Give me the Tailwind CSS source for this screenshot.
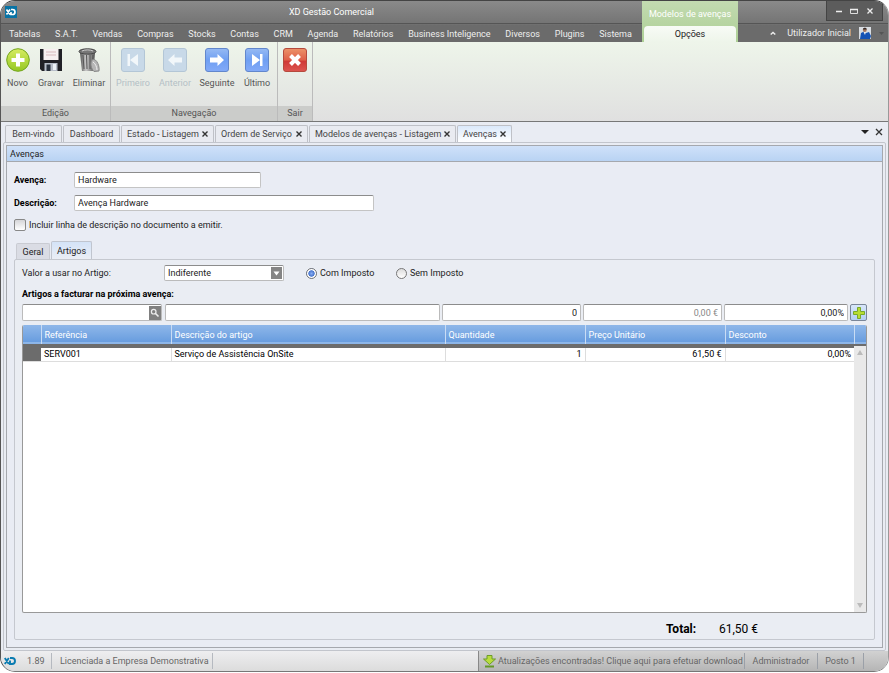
<!DOCTYPE html>
<html lang="pt">
<head>
    <meta charset="UTF-8">
    <meta name="viewport" content="width=device-width, initial-scale=1.0">
    <title>XD Gestão Comercial</title>
    <script src="https://cdn.jsdelivr.net/npm/@tailwindcss/browser@4"></script>
</head>
<body class="bg-white font-['Roboto','Open_Sans',sans-serif] text-[9px] leading-3 text-[#222]">

<div class="flex min-h-screen flex-col pb-px">
<div class="flex flex-1 flex-col overflow-hidden rounded-[15px] border-x border-t border-b border-l-[#555] border-t-[#444] border-r-[#999] border-b-[#777] bg-[#e9ecf3]">

    <!-- Title bar and menu -->
    <header class="flex h-[41px] bg-linear-to-b from-[#8a8a8a] from-0% via-[#747474] via-55% to-[#6b6b6b] to-60% text-[#eee]">
        <div class="flex w-[641px] shrink-0 flex-col">
            <div class="flex h-[23px] items-center border-b border-[#555] pl-1">
                <svg class="size-3" viewBox="0 0 12 12"><rect width="12" height="12" fill="#0873a5"/><path d="M1.500 3.500 5 8.500M5 3.500 1.500 8.500M6 3.500h1.500a2.500 2.500 0 0 1 0 5H6V6" fill="none" stroke="#fff" stroke-width="1.700"/></svg>
                <h1 class="flex-1 pl-1 text-center text-white">XD Gestão Comercial</h1>
            </div>
            <nav class="flex flex-1 items-center justify-between pt-px pr-[10px] pl-2">
                <a href="#">Tabelas</a>
                <a href="#">S.A.T.</a>
                <a href="#">Vendas</a>
                <a href="#">Compras</a>
                <a href="#">Stocks</a>
                <a href="#">Contas</a>
                <a href="#">CRM</a>
                <a href="#">Agenda</a>
                <a href="#">Relatórios</a>
                <a href="#">Business Inteligence</a>
                <a href="#">Diversos</a>
                <a href="#">Plugins</a>
                <a href="#">Sistema</a>
            </nav>
        </div>
        <div class="flex w-24 shrink-0 flex-col bg-linear-to-b from-[#c3dbb1] to-[#adcf95] px-0.5 text-center">
            <div class="flex h-[25px] items-center justify-center whitespace-nowrap text-white">Modelos de avenças</div>
            <a href="#" class="flex flex-1 items-center justify-center rounded-t-sm bg-linear-to-b from-[#f8fbf6] to-[#eef5ea] text-[#222]">Opções</a>
        </div>
        <div class="flex flex-1 flex-col">
            <div class="flex h-[23px] justify-end border-b border-[#555] pr-[5px]">
                <div class="flex h-5 w-[57px] items-center justify-around border-x border-b border-[#444] bg-[#5c5c5c] px-1">
                    <button aria-label="Minimizar"><svg class="size-2" viewBox="0 0 8 8"><path d="M1 4.500h6" stroke="#eee" stroke-width="1.500"/></svg></button>
                    <button aria-label="Maximizar"><svg class="size-2" viewBox="0 0 8 8"><path d="M.5 2.500h7v4h-7z" fill="none" stroke="#ddd"/><path d="M0 2.500h8" stroke="#eee" stroke-width="1.500"/></svg></button>
                    <button aria-label="Fechar"><svg class="size-2" viewBox="0 0 8 8"><path d="m1.500 1.500 5 5m0-5-5 5" stroke="#eee" stroke-width="1.300"/></svg></button>
                </div>
            </div>
            <div class="flex flex-1 items-center justify-end gap-2 pr-1">
                <button aria-label="Recolher"><svg class="mr-[3px] h-2 w-[6px]" viewBox="0 0 6 8"><path d="m.7 5.500 2.300-2 2.300 2" fill="none" stroke="#eee" stroke-width="1.400"/></svg></button>
                <a href="#">Utilizador Inicial</a>
                <svg class="size-3" viewBox="0 0 12 12"><rect width="12" height="12" fill="#d9dde2"/><path d="M1 12 2 6l3-1.500L7 6l3-1 2 4-1 3z" fill="#1552b5"/><path d="m4.500 5 1.500 3 1-3" fill="#eee"/><circle cx="5.800" cy="3" r="1.900" fill="#a9765b"/><path d="M3.800 2.500c0-2.500 4-2.500 4 0z" fill="#352b29"/></svg>
                <svg class="h-[3px] w-[5px]" viewBox="0 0 5 3"><path d="M0 0h5L2.500 3z" fill="#555"/></svg>
            </div>
        </div>
    </header>

    <!-- Ribbon -->
    <div class="flex h-20 border-b border-[#777] bg-linear-to-b from-[#eef5ea] to-[#e0e0e0] text-[#555]">
        <section class="flex flex-col border-r border-[#bbb]">
            <div class="flex flex-1 pt-[6px]">
                <button class="flex w-[33px] flex-col items-center gap-[5px]">
                    <svg class="size-6" viewBox="0 0 24 24"><defs><linearGradient id="lime" x2="0" y2="1"><stop stop-color="#d6ec62"/><stop offset="1" stop-color="#96c722"/></linearGradient></defs><circle cx="12" cy="12" r="11.300" fill="url(#lime)" stroke="#73a51e"/><path d="M12 5.500v13M5.500 12h13" stroke="#fff" stroke-width="4"/></svg>
                    Novo
                </button>
                <button class="flex w-[34px] flex-col items-center gap-[5px]">
                    <svg class="size-6" viewBox="0 0 24 24"><path d="M1 1h22v22H3l-2-2z" fill="#202026"/><path d="M4.500 1h15v11h-15z" fill="#f7eff0"/><path d="M7 4h10M7 7h10" stroke="#d8b9bd"/><path d="M5.500 15h13v8h-13z" fill="#b7bdc9"/><path d="M7.500 16.500h4V23h-4z" fill="#29303d"/><path d="M14 16h3v6h-3z" fill="#edf1f7"/></svg>
                    Gravar
                </button>
                <button class="flex w-[42px] flex-col items-center gap-[5px]">
                    <svg class="size-6" viewBox="0 0 24 24"><defs><linearGradient id="tin"><stop stop-color="#555"/><stop offset=".4" stop-color="#c9c9c9"/><stop offset="1" stop-color="#555"/></linearGradient></defs><path d="M3 5h15l-1.500 18H5z" fill="url(#tin)"/><path d="m6 7 1 14m2.500-14 .5 14M13 7v14m3-14-1 14" stroke="#555"/><ellipse cx="10.500" cy="3.500" rx="8.500" ry="2.700" fill="#777" stroke="#444"/><path d="M5 3c3-1.500 8-1.500 11 0" fill="none" stroke="#ccc"/><path d="M15 12c4-3 8 6 7 11l-5 .5c-3-3-4-8-2-11.500z" fill="#b5b5b5" stroke="#888"/><path d="M16 14c2 1 4 5 4 8" fill="none" stroke="#eee"/></svg>
                    Eliminar
                </button>
            </div>
            <div class="h-[15px] bg-[#cbccca] text-center leading-[15px]">Edição</div>
        </section>
        <section class="flex flex-col border-r border-[#bbb]">
            <div class="flex flex-1 px-px pt-[6px]">
                <button disabled class="flex w-[42px] flex-col items-center gap-[5px] text-[#b4bfc5]">
                    <svg class="size-6" viewBox="0 0 24 24"><rect x=".5" y=".5" width="23" height="23" rx="2.500" fill="#c8d9e8" stroke="#b3c6d6"/><path d="M6.500 6h2.500v12H6.500zM17 6v12l-8-6z" fill="#f2f7fa"/></svg>
                    Primeiro
                </button>
                <button disabled class="flex w-[42px] flex-col items-center gap-[5px] text-[#b4bfc5]">
                    <svg class="size-6" viewBox="0 0 24 24"><rect x=".5" y=".5" width="23" height="23" rx="2.500" fill="#c8d9e8" stroke="#b3c6d6"/><path d="m5 12 6.500-6v3.500H19v5h-7.500V18z" fill="#f2f7fa"/></svg>
                    Anterior
                </button>
                <button class="flex w-[42px] flex-col items-center gap-[5px]">
                    <svg class="size-6" viewBox="0 0 24 24"><defs><linearGradient id="blue" x2="0" y2="1"><stop stop-color="#96baf3"/><stop offset=".5" stop-color="#6f9ff2"/><stop offset="1" stop-color="#83aaf8"/></linearGradient></defs><rect x=".5" y=".5" width="23" height="23" rx="2.500" fill="url(#blue)" stroke="#6287cc"/><path d="m19 12-6.500-6v3.500H5v5h7.500V18z" fill="#fff"/></svg>
                    Seguinte
                </button>
                <button class="flex w-[38px] flex-col items-center gap-[5px]">
                    <svg class="size-6" viewBox="0 0 24 24"><rect x=".5" y=".5" width="23" height="23" rx="2.500" fill="url(#blue)" stroke="#6287cc"/><path d="M15 6h2.500v12H15zM7 6v12l8-6z" fill="#fff"/></svg>
                    Último
                </button>
            </div>
            <div class="h-[15px] bg-[#cbccca] text-center leading-[15px]">Navegação</div>
        </section>
        <section class="flex flex-col border-r border-[#bbb]">
            <div class="flex flex-1 pt-[6px]">
                <button aria-label="Sair" class="flex w-[34px] flex-col items-center">
                    <svg class="size-6" viewBox="0 0 24 24"><defs><linearGradient id="red" x2="0" y2="1"><stop stop-color="#ec9369"/><stop offset=".5" stop-color="#df6048"/><stop offset=".55" stop-color="#cf3936"/><stop offset="1" stop-color="#dd5550"/></linearGradient></defs><rect x=".5" y=".5" width="23" height="23" rx="2.500" fill="url(#red)" stroke="#b54a3d"/><path d="m7.500 7.500 9 9m0-9-9 9" stroke="#fff" stroke-width="4"/></svg>
                </button>
            </div>
            <div class="h-[15px] bg-[#cbccca] text-center leading-[15px]">Sair</div>
        </section>
    </div>

    <!-- Document tabs -->
    <div class="flex h-5 items-end gap-px px-1 pt-[3px] text-[#444]">
        <a href="#" class="flex h-full w-[57px] items-center justify-center rounded-t-xs border border-b-0 border-[#bfc1c7] bg-[#e9ebf1]">Bem-vindo</a>
        <a href="#" class="flex h-full w-[57px] items-center justify-center rounded-t-xs border border-b-0 border-[#bfc1c7] bg-[#e9ebf1]">Dashboard</a>
        <a href="#" class="flex h-full w-[93px] items-center justify-between rounded-t-xs border border-b-0 border-[#bfc1c7] bg-[#e9ebf1] px-[5px] whitespace-nowrap">Estado - Listagem
            <svg class="size-[6px]" viewBox="0 0 6 6"><path d="m.5.500 5 5m0-5-5 5" stroke="#333" stroke-width="1.400"/></svg></a>
        <a href="#" class="flex h-full w-[93px] items-center justify-between rounded-t-xs border border-b-0 border-[#bfc1c7] bg-[#e9ebf1] px-[5px] whitespace-nowrap">Ordem de Serviço
            <svg class="size-[6px]" viewBox="0 0 6 6"><path d="m.5.500 5 5m0-5-5 5" stroke="#333" stroke-width="1.400"/></svg></a>
        <a href="#" class="flex h-full w-[147px] items-center justify-between rounded-t-xs border border-b-0 border-[#bfc1c7] bg-[#e9ebf1] px-[5px] whitespace-nowrap">Modelos de avenças - Listagem
            <svg class="size-[6px]" viewBox="0 0 6 6"><path d="m.5.500 5 5m0-5-5 5" stroke="#333" stroke-width="1.400"/></svg></a>
        <a href="#" class="flex h-full w-[55px] items-center justify-between rounded-t-xs border border-b-0 border-[#bfc1c7] bg-linear-to-b from-[#dbe9fb] to-white px-[5px]">Avenças
            <svg class="size-[6px]" viewBox="0 0 6 6"><path d="m.5.500 5 5m0-5-5 5" stroke="#333" stroke-width="1.400"/></svg></a>
        <div class="ml-auto flex h-full items-center gap-[6px] pr-px">
            <button aria-label="Lista de separadores"><svg class="mb-1 h-1 w-2" viewBox="0 0 8 4"><path d="M0 0h8L4 4z" fill="#222"/></svg></button>
            <button aria-label="Fechar separador"><svg class="mb-1 size-2" viewBox="0 0 8 8"><path d="m1 1 6 6m0-6-6 6" stroke="#333" stroke-width="1.300"/></svg></button>
        </div>
    </div>

    <!-- Document -->
    <main class="mx-[2px] flex flex-1 flex-col rounded-xs border border-[#c2c5cc] p-[2px]">
        <div class="flex flex-1 flex-col border border-[#a5a8ae] bg-[#e9ecf4]">
            <h2 class="h-4 border-b border-[#a5a8ae] bg-linear-to-b from-[#cfe1f9] to-[#b9d3f3] pl-[3px] leading-4">Avenças</h2>
            <div class="flex flex-1 flex-col px-[7px] pt-[10px] pb-[7px]">
                <div class="flex items-center">
                    <label for="avenca" class="w-[60px] font-bold text-black">Avença:</label>
                    <input id="avenca" value="Hardware" class="h-4 w-[187px] rounded-xs border border-[#c4c4c4] border-t-[#8c8c8c] bg-white px-[3px]">
                </div>
                <div class="mt-[7px] flex items-center">
                    <label for="descricao" class="w-[60px] font-bold text-black">Descrição:</label>
                    <input id="descricao" value="Avença Hardware" class="h-4 w-[300px] rounded-xs border border-[#c4c4c4] border-t-[#8c8c8c] bg-white px-[3px]">
                </div>
                <div class="mt-2 flex items-center gap-[3px]">
                    <input id="incluir" type="checkbox" class="size-3 appearance-none rounded-xs border border-[#888] bg-linear-to-b from-[#d5d5d8] to-white">
                    <label for="incluir">Incluir linha de descrição no documento a emitir.</label>
                </div>

                <div class="mt-[10px] flex h-[18px] items-end gap-px pl-[2px]">
                    <a href="#" class="flex h-4 w-[34px] items-center justify-center rounded-t-xs border border-b-0 border-[#c9cbd2] bg-[#dadce4]">Geral</a>
                    <a href="#" class="flex h-[18px] w-[41px] items-center justify-center rounded-t-xs border border-b-0 border-[#c0c5cf] bg-linear-to-b from-[#d4e3f7] to-[#ebeef5]">Artigos</a>
                </div>

                <div class="flex flex-1 flex-col rounded-xs border border-[#c5c8cf] bg-[#eaedf3] px-[7px] pt-[5px]">
                    <div class="flex items-center">
                        <label for="valor" class="w-[142px]">Valor a usar no Artigo:</label>
                        <div class="relative">
                            <select id="valor" class="block h-4 w-[120px] appearance-none rounded-xs border border-[#bbb] border-t-[#8c8c8c] bg-white px-[3px]">
                                <option>Indiferente</option>
                            </select>
                            <svg class="pointer-events-none absolute top-[2px] right-[2px] h-3 w-[11px]" viewBox="0 0 11 12"><path d="M0 0h11v12H0z" fill="#858585"/><path d="M2.500 4.500h6l-3 4z" fill="#fff"/></svg>
                        </div>
                        <label class="ml-[22px] flex w-[90px] items-center gap-[3px]">
                            <input type="radio" name="imposto" checked class="size-[11px] appearance-none rounded-full border border-[#777] bg-[#5c87d6] bg-radial from-[#88aef5] from-0% via-[#4975cc] via-45% to-white to-55%">
                            Com Imposto
                        </label>
                        <label class="flex items-center gap-[3px]">
                            <input type="radio" name="imposto" class="size-[11px] appearance-none rounded-full border border-[#777] bg-linear-to-b from-[#ddd] to-white">
                            Sem Imposto
                        </label>
                    </div>
                    <h3 class="mt-[7px] font-bold text-black">Artigos a facturar na próxima avença:</h3>

                    <div class="mt-1 flex gap-[2px]">
                        <div class="mr-px flex h-[17px] w-[140px] items-center rounded-xs border border-[#bbb] border-t-[#8c8c8c] bg-white">
                            <input aria-label="Referência" class="min-w-0 flex-1 px-[3px]">
                            <button aria-label="Procurar" class="flex h-[14px] w-3 items-center justify-center bg-[#808080]"><svg class="size-[10px]" viewBox="0 0 10 10"><circle cx="3.700" cy="3.700" r="2.300" fill="none" stroke="#eee" stroke-width="1.200"/><path d="m5.500 5.500 3 3" stroke="#eee" stroke-width="1.600"/></svg></button>
                        </div>
                        <input aria-label="Descrição do artigo" class="h-[17px] min-w-0 flex-1 rounded-xs border border-[#bbb] border-t-[#8c8c8c] bg-white px-[3px]">
                        <input aria-label="Quantidade" value="0" class="h-[17px] w-[139px] rounded-xs border border-[#bbb] border-t-[#8c8c8c] bg-white px-[3px] text-right">
                        <input aria-label="Preço Unitário" value="0,00 €" disabled class="h-[17px] w-[139px] rounded-xs border border-[#bbb] border-t-[#8c8c8c] bg-white px-[3px] text-right text-[#888]">
                        <input aria-label="Desconto" value="0,00%" class="h-[17px] w-[124px] rounded-xs border border-[#bbb] border-t-[#8c8c8c] bg-white px-[3px] text-right">
                        <button aria-label="Adicionar" class="flex size-[17px] items-center justify-center rounded-xs border border-[#7a8698] bg-linear-to-b from-[#d8e7fa] to-[#b3cff3]"><svg class="size-3" viewBox="0 0 12 12"><path d="M4.500.5h3v4h4v3h-4v4h-3v-4h-4v-3h4z" fill="#b8dd32" stroke="#79a928"/></svg></button>
                    </div>

                    <div class="relative mt-1 flex-1 overflow-hidden rounded-xs border border-[#999] border-t-0 bg-white">
                        <table class="w-full table-fixed text-left">
                            <colgroup>
                                <col class="w-[18px]"><col class="w-[130px]"><col><col class="w-[140px]"><col class="w-[140px]"><col class="w-[129px]"><col class="w-[12px]">
                            </colgroup>
                            <thead>
                                <tr class="h-[21px] border-b-4 border-[#6c6c6c] bg-linear-to-b from-[#8fb7e9] to-[#689ddf] text-white">
                                    <th class="border-r border-r-[#c9dcf4]"></th>
                                    <th class="border-r border-r-[#c9dcf4] px-[3px] font-normal">Referência</th>
                                    <th class="border-r border-r-[#c9dcf4] px-[3px] font-normal">Descrição do artigo</th>
                                    <th class="border-r border-r-[#c9dcf4] px-[3px] font-normal">Quantidade</th>
                                    <th class="border-r border-r-[#c9dcf4] px-[3px] font-normal">Preço Unitário</th>
                                    <th class="border-r border-r-[#c9dcf4] px-[3px] font-normal">Desconto</th>
                                    <th></th>
                                </tr>
                            </thead>
                            <tbody>
                                <tr class="h-[15px] border-b border-[#ddd] text-black">
                                    <td class="bg-[#6c6c6c]"></td>
                                    <td class="border-r border-[#ddd] px-[3px]">SERV001</td>
                                    <td class="border-r border-[#ddd] px-[3px]">Serviço de Assistência OnSite</td>
                                    <td class="border-r border-[#ddd] px-[3px] text-right">1</td>
                                    <td class="border-r border-[#ddd] px-[3px] text-right">61,50 €</td>
                                    <td class="px-[3px] text-right">0,00%</td>
                                    <td></td>
                                </tr>
                            </tbody>
                        </table>
                        <div class="absolute top-[21px] right-0 bottom-0 flex w-3 flex-col items-center justify-between bg-[#e9e9e9] py-1">
                            <svg class="h-[5px] w-[6px]" viewBox="0 0 6 5"><path d="M3 0 6 5H0z" fill="#bbb"/></svg>
                            <svg class="h-[5px] w-[6px]" viewBox="0 0 6 5"><path d="M0 0h6L3 5z" fill="#bbb"/></svg>
                        </div>
                    </div>

                    <div class="flex h-[26px] items-center justify-end pt-[6px] pr-[109px] text-[12px] text-black">
                        <span class="w-[53px] font-bold">Total:</span>
                        <span>61,50 €</span>
                    </div>
                </div>
            </div>
        </div>
    </main>

    <!-- Status bar -->
    <footer class="flex h-5 items-center bg-linear-to-b from-[#eeeef0] to-[#dcdcdc] text-[#666]">
        <svg class="ml-[3px] h-2 w-3" viewBox="0 0 12 8"><path d="m.8 1 4 6m0-6-4 6M6 1h2a3 3 0 0 1 0 6H6V3.500" fill="none" stroke="#0b7cb1" stroke-width="1.900"/></svg>
        <span class="ml-[11px] w-[25px] border-r border-[#b5b9c0] leading-4">1.89</span>
        <span class="w-[161px] border-r border-[#b5b9c0] pl-2 leading-4 whitespace-nowrap">Licenciada a Empresa Demonstrativa</span>
        <div class="ml-auto flex h-full items-center border-l border-[#888] bg-linear-to-b from-[#d2d2d2] to-[#b5b5b5] pr-6">
            <a href="#" class="flex w-[266px] items-center gap-[2px] border-r border-[#9ba0a8] pl-1 leading-4 whitespace-nowrap">
                <svg class="size-[13px] shrink-0" viewBox="0 0 13 13"><path d="M4 .5h5V4h3.500l-6 5.500L.5 4H4z" fill="#b8dc3d" stroke="#6c9d26"/><path d="M2 11.500h9" stroke="#659827" stroke-width="2"/></svg>
                Atualizações encontradas! Clique aqui para efetuar download
            </a>
            <span class="w-[73px] border-r border-[#9ba0a8] text-center leading-4">Administrador</span>
            <span class="w-[46px] border-r border-[#9ba0a8] text-center leading-4">Posto 1</span>
        </div>
    </footer>
</div>
</div>

</body>
</html>
